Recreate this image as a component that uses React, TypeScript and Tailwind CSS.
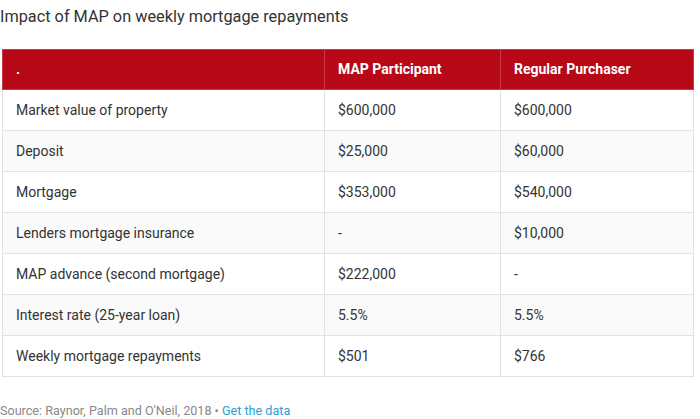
import React from "react";

const rows: [string, string, string][] = [
  ["Market value of property", "$600,000", "$600,000"],
  ["Deposit", "$25,000", "$60,000"],
  ["Mortgage", "$353,000", "$540,000"],
  ["Lenders mortgage insurance", "-", "$10,000"],
  ["MAP advance (second mortgage)", "$222,000", "-"],
  ["Interest rate (25-year loan)", "5.5%", "5.5%"],
  ["Weekly mortgage repayments", "$501", "$766"],
];

export default function App() {
  return (
    <div className="w-[700px] h-[419px] bg-white font-['Roboto',sans-serif] text-[#333]">
      <div className="pt-[6px] pl-0 text-[16.3px] leading-[22px] text-[#333]">
        Impact of MAP on weekly mortgage repayments
      </div>
      <div className="pt-[21px] pl-[2px]">
        <table className="w-[691px] border-collapse table-fixed text-[14px]">
          <colgroup>
            <col className="w-[322px]" />
            <col className="w-[176px]" />
            <col className="w-[193px]" />
          </colgroup>
          <thead>
            <tr className="bg-[#b70818] h-[40px]">
              <th className="text-left font-bold text-white px-[13px] border border-[#cc3a45]">.</th>
              <th className="text-left font-bold text-white px-[13px] border-y border-[#cc3a45]">MAP Participant</th>
              <th className="text-left font-bold text-white px-[13px] border border-[#cc3a45]">Regular Purchaser</th>
            </tr>
          </thead>
          <tbody>
            {rows.map((r, i) => (
              <tr key={i} className={`h-[41px] ${i % 2 === 1 ? "bg-[#fafafa]" : "bg-white"}`}>
                {r.map((c, j) => (
                  <td key={j} className="px-[13px] border border-[#e2e2e2] text-[#333]">
                    {c}
                  </td>
                ))}
              </tr>
            ))}
          </tbody>
        </table>
      </div>
      <div className="pt-[26px] text-[12.6px] leading-[16px] text-[#888]">
        Source: Raynor, Palm and O'Neil, 2018 • <span className="text-[#2a9fd6]">Get the data</span>
      </div>
    </div>
  );
}
